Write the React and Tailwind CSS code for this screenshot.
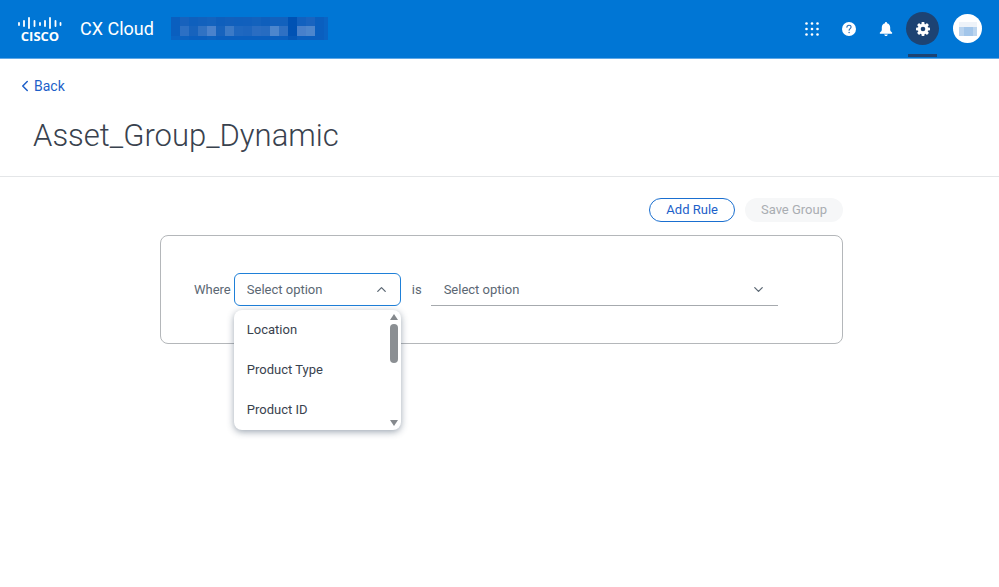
import { useState } from 'react';
import { ChevronDown, ChevronLeft, ChevronUp } from 'lucide-react';

const RULE_FIELDS = ['Location', 'Product Type', 'Product ID'];

// Masked account name, one row of mosaic cells per line
const MASK_ROWS = [
  {
    y: 0,
    h: 9,
    cells: ['#0a5fbf', '#1762bd', '#0f60bd', '#1261bd', '#1463be', '#0f5fbc', '#1260bc', '#1060bd', '#1160bd', '#1362bd', '#0f5fbc', '#1261bd', '#1261bd', '#0052b4', '#1261bf', '#1964c0', '#0a5fbf', '#0a64c4'],
  },
  {
    y: 9,
    h: 10,
    cells: ['#0a5fbf', '#2c70c4', '#1763bd', '#3072c3', '#4a82cc', '#1763bd', '#3b7ac7', '#1f68c0', '#1d66bf', '#2a6dc2', '#276cc1', '#4d86cd', '#2e70c3', '#0052b4', '#4880cb', '#4d86cd', '#0a5fbf', '#0a64c4'],
  },
  {
    y: 19,
    h: 4,
    cells: ['#0a64c4', '#0c62c0', '#0a5fbf', '#0a5fbf', '#0c62c0', '#0a5fbf', '#0a5fbf', '#0a5fbf', '#0a5fbf', '#0a5fbf', '#0a5fbf', '#0a5fbf', '#0a5fbf', '#0558b8', '#0a5fbf', '#0a5fbf', '#0a5fbf', '#0a64c4'],
  },
];

function CiscoLogo() {
  const bars = [
    [0, 6, 9],
    [5, 4, 10],
    [10, 1, 12],
    [15.5, 4, 10],
    [21, 6, 9],
    [26, 4, 10],
    [31, 1, 12],
    [36.5, 4, 10],
    [41.5, 6, 9],
  ];
  return (
    <a href="#home" className="flex flex-col items-center text-white">
      <svg width="44" height="14" viewBox="0 0 44 14" fill="none" stroke="currentColor" strokeWidth="1.8" strokeLinecap="round">
        {bars.map(([x, top, bottom]) => (
          <line key={x} x1={x + 1} x2={x + 1} y1={top + 1} y2={bottom} />
        ))}
      </svg>
      <span className="font-['Open_Sans',sans-serif] text-[13px] leading-3 font-bold uppercase">cisco</span>
    </a>
  );
}

function MaskedAccount() {
  return (
    <svg width="157" height="23" viewBox="0 0 157 23" shapeRendering="crispEdges" aria-hidden="true">
      {MASK_ROWS.map((row) =>
        row.cells.map((fill, i) => (
          <rect key={`${row.y}-${i}`} x={i * 9} y={row.y} width={9} height={row.h} fill={fill} />
        ))
      )}
    </svg>
  );
}

function AppsIcon() {
  return (
    <svg width="14" height="14" viewBox="0 0 14 14" fill="currentColor">
      {[1.5, 7, 12.5].map((y) => [1.5, 7, 12.5].map((x) => <circle key={`${x}-${y}`} cx={x} cy={y} r="1.3" />))}
    </svg>
  );
}

function HelpIcon() {
  return (
    <svg width="14" height="14" viewBox="0 0 14 14">
      <circle cx="7" cy="7" r="7" fill="currentColor" />
      <path d="M4.9 5.3C4.9 4 5.8 3.2 7 3.2s2.1.8 2.1 1.9c0 1.4-2 1.6-2 3.2" fill="none" stroke="#2a6fb8" strokeWidth="1.1" strokeLinecap="round" />
      <circle cx="7.1" cy="10.5" r=".7" fill="#2a6fb8" />
    </svg>
  );
}

function BellIcon() {
  return (
    <svg width="14" height="16" viewBox="0 0 14 16" fill="currentColor">
      <path d="M7 1c.6 0 1 .4 1 1v.3c2 .5 3.2 2.2 3.2 4.3v2.2c0 1.2.7 1.9 1.8 2.6.4.4.2 1.300-.4 1.300H1.400c-.6 0-.8-.9-.4-1.300 1.100-.7 1.800-1.400 1.800-2.600V6.600c0-2.100 1.200-3.800 3.200-4.300V2c0-.6.4-1 1-1z" />
      <path d="M5.2 13.4h3.600c-.1.900-.8 1.500-1.800 1.500s-1.700-.6-1.800-1.500z" />
    </svg>
  );
}

function GearIcon() {
  return (
    <svg width="14" height="14" viewBox="0 0 14 14">
      <g fill="currentColor">
        {[0, 45, 90, 135].map((angle) => (
          <rect key={angle} x="5.5" y="0" width="3" height="14" rx=".8" transform={`rotate(${angle} 7 7)`} />
        ))}
        <circle cx="7" cy="7" r="5.2" />
      </g>
      <circle cx="7" cy="7" r="2.3" fill="#1d4373" />
    </svg>
  );
}

function Header() {
  return (
    <header className="flex h-[59px] items-center justify-between border-b border-[#5fa8e6] bg-[#0076d5] pr-[17px] pl-[18px] text-white">
      <div className="flex items-center pb-px">
        <CiscoLogo />
        <span className="ml-[18px] text-lg leading-6">CX Cloud</span>
        <div className="ml-[17px]">
          <MaskedAccount />
        </div>
      </div>

      <nav className="flex items-center self-stretch pb-px">
        <button type="button" aria-label="Apps" className="flex w-[37px] justify-center">
          <AppsIcon />
        </button>
        <button type="button" aria-label="Help" className="flex w-[37px] justify-center">
          <HelpIcon />
        </button>
        <button type="button" aria-label="Notifications" className="flex w-[37px] justify-center">
          <BellIcon />
        </button>
        <button type="button" aria-label="Settings" className="relative flex w-[37px] items-center justify-center self-stretch">
          <span className="flex size-[33px] items-center justify-center rounded-full bg-[#1d4373]">
            <GearIcon />
          </span>
          <span className="absolute inset-x-1 bottom-0 h-[3px] bg-[#1d4373]" />
        </button>
        <button type="button" aria-label="Account" className="ml-3 flex size-[29px] items-center justify-center rounded-full bg-white">
          <svg width="18" height="14" viewBox="0 0 18 14" shapeRendering="crispEdges">
            <rect width="18" height="5" fill="#eef3f9" />
            <rect y="5" width="5" height="9" fill="#b9d3ee" />
            <rect x="5" y="5" width="9" height="9" fill="#a3c6ea" />
            <rect x="14" y="5" width="4" height="9" fill="#bcd5ee" />
          </svg>
        </button>
      </nav>
    </header>
  );
}

export default function App() {
  const [open, setOpen] = useState(true);
  const [field, setField] = useState('');

  const toggleMenu = (e) => {
    e.preventDefault();
    setOpen(!open);
  };

  const pickField = (name) => {
    setField(name);
    setOpen(false);
  };

  return (
    <div className="min-h-screen bg-white font-['Roboto',sans-serif] text-[#5b6773]">
      <Header />

      <section className="border-b border-[#e4e6e8] pt-[17px] pb-5">
        <a href="#back" className="ml-4 flex w-fit items-center text-sm leading-5 text-[#1d5fc9]">
          <ChevronLeft size={18} strokeWidth={2} />
          Back
        </a>
        <h1 className="mt-5 ml-[33px] text-[31px] leading-10 font-light text-[#39424e]">Asset_Group_Dynamic</h1>
      </section>

      <main className="pt-[21px] pr-39 pl-40">
        <div className="flex justify-end gap-2.5">
          <button type="button" className="h-6 rounded-full border border-[#1a6fd0] px-4 text-[13px] leading-5 text-[#1d5fc9]">
            Add Rule
          </button>
          <button type="button" disabled className="h-6 rounded-full bg-[#f6f7f8] px-4 text-[13px] leading-5 text-[#a9adb2]">
            Save Group
          </button>
        </div>

        <div className="mt-[13px] flex items-center rounded-lg border border-[#b4b7ba] py-[37px] pr-16 pl-[33px] text-[13px] leading-5">
          <label htmlFor="rule-field">Where</label>
          <div className="relative ml-[3px] w-[167px]">
            <select
              id="rule-field"
              value={field}
              onMouseDown={toggleMenu}
              onChange={(e) => setField(e.target.value)}
              className="block h-[33px] w-full appearance-none rounded-md border border-[#1f80d8] bg-white px-3 outline-none"
            >
              <option value="">Select option</option>
              {RULE_FIELDS.map((name) => (
                <option key={name}>{name}</option>
              ))}
            </select>
            <ChevronUp size={15} strokeWidth={2} className="pointer-events-none absolute top-[9px] right-3" />

            {open && (
              <div className="absolute inset-x-0 top-full z-10 mt-1 flex rounded-lg bg-white text-[#39424e] shadow-[0_2px_7px_rgba(40,60,85,0.45)]">
                <ul className="flex-1">
                  {RULE_FIELDS.map((name) => (
                    <li key={name}>
                      <button type="button" onClick={() => pickField(name)} className="block h-10 w-full px-[13px] text-left">
                        {name}
                      </button>
                    </li>
                  ))}
                </ul>
                <div className="flex w-[14px] flex-col items-center py-1">
                  <svg width="8" height="6" viewBox="0 0 8 6" fill="#85898d">
                    <path d="M4 0l4 6H0z" />
                  </svg>
                  <div className="mt-1 h-[39px] w-2 rounded-full bg-[#8b8f93]" />
                  <svg width="8" height="6" viewBox="0 0 8 6" fill="#85898d" className="mt-auto">
                    <path d="M0 0h8L4 6z" />
                  </svg>
                </div>
              </div>
            )}
          </div>

          <label htmlFor="rule-value" className="ml-[11px]">is</label>
          <div className="relative ml-[9px] flex-1">
            <select id="rule-value" className="block h-[33px] w-full appearance-none border-y border-t-transparent border-b-[#a6aaae] bg-white px-[13px] outline-none">
              <option>Select option</option>
            </select>
            <ChevronDown size={15} strokeWidth={2} className="pointer-events-none absolute top-[9px] right-3" />
          </div>
        </div>
      </main>
    </div>
  );
}
